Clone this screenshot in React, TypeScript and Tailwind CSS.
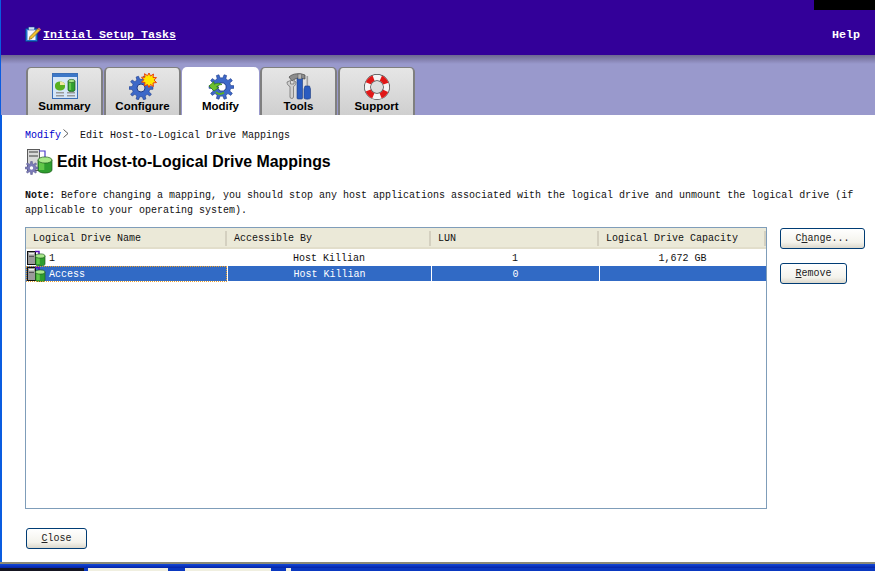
const mono = "font-['Liberation_Mono',monospace]"
const sans = "font-['Liberation_Sans',Arial,sans-serif]"

function gearPath(cx: number, cy: number, outer: number, inner: number, teeth: number) {
  const pts: string[] = []
  const step = (Math.PI * 2) / teeth
  for (let i = 0; i < teeth; i++) {
    const a = i * step
    const list: [number, number][] = [
      [inner, a - step * 0.5],
      [inner, a - step * 0.27],
      [outer, a - step * 0.17],
      [outer, a + step * 0.17],
      [inner, a + step * 0.27],
    ]
    list.forEach(([r, t]) => {
      pts.push(`${(cx + r * Math.cos(t)).toFixed(2)} ${(cy + r * Math.sin(t)).toFixed(2)}`)
    })
  }
  return `M${pts.join("L")}Z`
}

function Cylinder({ x, y, w, h }: { x: number; y: number; w: number; h: number }) {
  const ry = w * 0.22
  return (
    <g>
      <path d={`M${x} ${y}V${y + h}A${w / 2} ${ry} 0 0 0 ${x + w} ${y + h}V${y}Z`} fill="#2f9e2f" stroke="#1c5c1c" strokeWidth="0.7" />
      <path d={`M${x + 1} ${y}V${y + h}H${x + w * 0.45}V${y}Z`} fill="#62c84a" />
      <ellipse cx={x + w / 2} cy={y} rx={w / 2} ry={ry} fill="#a8e88a" stroke="#1c5c1c" strokeWidth="0.7" />
    </g>
  )
}

function SummaryIcon() {
  return (
    <svg width="26" height="27" viewBox="0 0 26 27">
      <rect x="0.5" y="0.5" width="25" height="25" fill="#d5e6f8" stroke="#3b6fb5" />
      <rect x="1" y="1" width="24" height="3" fill="#3d78c8" />
      <path d="M3 12A5 3.500 0 0 1 13 12V14A5 3.500 0 0 1 3 14Z" fill="#58b020" />
      <path d="M8 12V8.500A5 3.500 0 0 1 13 12Z" fill="#f2e8a0" />
      <Cylinder x={16} y={8} w={7} h={9} />
      <rect x="4" y="19" width="8" height="1.500" fill="#9a9a9a" />
      <rect x="4" y="22" width="8" height="1.500" fill="#9a9a9a" />
      <rect x="15" y="19" width="8" height="1.500" fill="#9a9a9a" />
      <rect x="15" y="22" width="8" height="1.500" fill="#9a9a9a" />
    </svg>
  )
}

function ConfigureIcon() {
  return (
    <svg width="28" height="27" viewBox="0 0 28 27">
      <path d={gearPath(12, 15, 12, 8.8, 10)} fill="#3d68c8" stroke="#1e3c8c" strokeWidth="0.6" />
      <circle cx="12" cy="15" r="4" fill="#dcdcdc" stroke="#1e3c8c" />
      <path d="M20 0l1.500 3 3-2-.5 3.500 3.500.2-2.500 2.400 2.500 2.400-3.500.5.5 3.500-3-2-1.500 3-1.500-3-3 1.500.5-3.500-3.500-.5 2.500-2.300-2.500-2.500 3.500 0-.5-3.500 3 2z" fill="#ffe600" stroke="#e8400c" strokeWidth="1" />
    </svg>
  )
}

function ModifyIcon() {
  return (
    <svg width="26" height="26" viewBox="0 0 26 26">
      <path d={gearPath(13.5, 13, 12.5, 9.2, 10)} fill="#3d68c8" stroke="#1e3c8c" strokeWidth="0.6" />
      <circle cx="14" cy="13" r="4.200" fill="#fff" stroke="#1e3c8c" />
      <path d="M1 12l5-4.500v2.700c3.500-1.500 6-1.200 8 .3-2.500.2-4.500 1-5.500 2.500l2.500.5-5 3.500z" fill="#6cc02c" stroke="#2c7a12" strokeWidth="0.7" />
      <path d="M8 18c2 2.500 5 2.500 8 .5" fill="none" stroke="#58b020" strokeWidth="2" />
    </svg>
  )
}

function ToolsIcon() {
  return (
    <svg width="26" height="27" viewBox="0 0 26 27">
      <path d="M3 4C7 0 14 0 19 2V6C14 5 11 5 9 6L6 8Z" fill="#8c8c8c" stroke="#444" strokeWidth="0.7" />
      <rect x="11" y="5" width="5.500" height="21" rx="1" fill="#2a5cc0" stroke="#1c3c80" strokeWidth="0.6" />
      <rect x="12" y="1" width="3.500" height="5" fill="#b8b8b8" stroke="#555" strokeWidth="0.5" />
      <path d="M1 9c0 2.500 1.500 4 3 4.500V24c0 2 3.500 2 3.500 0V13.500C9 13 10 11 10 9L8 7.500V11H4.500V7.500Z" fill="#cfcfcf" stroke="#666" strokeWidth="0.7" />
      <rect x="20.500" y="3" width="1.600" height="11" fill="#a0a0a0" />
      <path d="M19 13h4.500l1 3v9c0 1.500-6.500 1.500-6.500 0v-9z" fill="#2a5cc0" stroke="#1c3c80" strokeWidth="0.6" />
    </svg>
  )
}

function SupportIcon() {
  return (
    <svg width="26" height="26" viewBox="0 0 26 26">
      <circle cx="13" cy="13" r="9.500" fill="none" stroke="#444" strokeWidth="6.800" />
      <circle cx="13" cy="13" r="9.500" fill="none" stroke="#f4f4f4" strokeWidth="5.400" />
      <circle cx="13" cy="13" r="9.500" fill="none" stroke="#e01818" strokeWidth="5.400" strokeDasharray="7.500 7.420" strokeDashoffset="3.750" transform="rotate(45 13 13)" />
    </svg>
  )
}

function NotepadIcon() {
  return (
    <svg width="16" height="17" viewBox="0 0 16 17">
      <rect x="0.500" y="2.500" width="12" height="13" rx="1" fill="#1f6fd0" stroke="#103a8c" />
      <rect x="2.500" y="4" width="8" height="10" fill="#f6f8ff" />
      <rect x="3.500" y="1" width="6" height="3" fill="#cfe0f6" stroke="#103a8c" strokeWidth="0.5" />
      <path d="M5 10.500L13 2.500l2 2-8 8-3 1z" fill="#f0c030" stroke="#6b4a10" strokeWidth="0.6" />
      <path d="M13 2.500l2 2 1-1-2-2z" fill="#e07070" />
    </svg>
  )
}

function MappingIcon() {
  return (
    <svg width="28" height="27" viewBox="0 0 28 27">
      <rect x="2.500" y="1.500" width="12" height="21" fill="#d8d8d8" stroke="#5a5a5a" />
      <rect x="4" y="3" width="9" height="2" fill="#8a8a8a" />
      <rect x="4" y="7" width="9" height="2" fill="#8a8a8a" />
      <path d="M14 3h6v7" fill="none" stroke="#4b3cc8" strokeWidth="1.200" />
      <Cylinder x={13} y={12} w={14} h={10} />
      <path d={gearPath(6.500, 20, 6.500, 4.400, 8)} fill="#7c7cb8" stroke="#4a4a80" strokeWidth="0.5" />
      <circle cx="6.500" cy="20" r="1.700" fill="#fff" />
    </svg>
  )
}

function RowIcon() {
  return (
    <svg width="20" height="16" viewBox="0 0 20 16">
      <rect x="0.500" y="1.500" width="8" height="13" fill="#9a9a9a" stroke="#111" />
      <rect x="2" y="3" width="5" height="1.500" fill="#eee" />
      <rect x="2" y="6" width="5" height="1" fill="#555" />
      <path d="M8 1.500h4v4" fill="none" stroke="#5a10b8" strokeWidth="1.500" />
      <Cylinder x={8.500} y={6} w={9.500} h={8} />
    </svg>
  )
}

function Tab({ label, icon, active }: { label: string; icon: React.ReactNode; active?: boolean }) {
  return (
    <div
      className={`w-[77px] h-[48px] flex flex-col items-center rounded-t-[5px] ${
        active ? "bg-white" : "border-x-2 border-t border-[#7f7f7f] bg-[linear-gradient(#e6e6e6,#cfcfcf)]"
      }`}
    >
      <div className={`h-[27px] flex items-center justify-center ${active ? "mt-[6px]" : "mt-[5px]"}`}>{icon}</div>
      <span className={`${sans} text-[11.5px] font-bold text-black leading-[13px]`}>{label}</span>
    </div>
  )
}

function XpButton({ children, width }: { children: React.ReactNode; width: string }) {
  return (
    <button
      className={`${width} h-[21px] rounded-[3px] border border-[#003c74] bg-[linear-gradient(#ffffff,#f4f3ec_70%,#dcd8cc)] ${mono} text-[10px] leading-none text-[#222] flex items-center justify-center`}
    >
      {children}
    </button>
  )
}

const colClass = "flex items-center justify-center text-[10px]"

export default function App() {
  return (
    <div className={`w-[875px] h-[571px] overflow-hidden relative flex flex-col bg-black ${mono}`}>
      <div className="absolute right-0 top-0 w-[61px] h-[10px] bg-black" />

      <div className="flex-1 flex flex-col border-l border-[#0a5ce0] bg-white min-h-0">
        {/* top bar */}
        <div className="h-[55px] bg-[#330099] flex items-end justify-between pl-[24px] pr-[15px] pb-[13px] shrink-0">
          <div className="flex items-center gap-[2px] text-white -mb-[1px]">
            <NotepadIcon />
            <span className="text-[11.67px] font-bold underline leading-[14px]">Initial Setup Tasks</span>
          </div>
          <span className="text-[11.67px] font-bold text-white leading-[14px]">Help</span>
        </div>

        {/* tabs */}
        <div className="h-[60px] shrink-0 flex items-end gap-[1px] pl-[25px] bg-[linear-gradient(#6d6790,#9999cc_9px)]">
          <Tab label="Summary" icon={<SummaryIcon />} />
          <Tab label="Configure" icon={<ConfigureIcon />} />
          <Tab label="Modify" icon={<ModifyIcon />} active />
          <Tab label="Tools" icon={<ToolsIcon />} />
          <Tab label="Support" icon={<SupportIcon />} />
        </div>

        {/* content */}
        <div className="flex-1 flex flex-col border-l border-[#0a5ce0] pl-[23px] pr-[10px] min-h-0 text-[10px] text-[#111]">
          <div className="flex items-center h-[14px] mt-[13px]">
            <span className="text-[#0000cc] w-[37px]">Modify</span>
            <svg width="8" height="10" viewBox="0 0 8 10" className="-mt-[3px]">
              <path d="M1.500 .5L6 4.500 1.500 8.500" fill="none" stroke="#333" strokeWidth="0.8" />
            </svg>
            <span className="ml-[10px]">Edit Host-to-Logical Drive Mappings</span>
          </div>

          <div className="flex items-center h-[27px] mt-[6px] gap-[4px]">
            <MappingIcon />
            <span className={`${sans} text-[15.9px] font-bold text-black leading-none`}>Edit Host-to-Logical Drive Mappings</span>
          </div>

          <p className="mt-[13px] h-[30px] leading-[15px] w-[840px]">
            <b>Note:</b> Before changing a mapping, you should stop any host applications associated with the logical drive and unmount the logical drive (if applicable to your operating system).
          </p>

          <div className="flex mt-[9px] gap-[13px]">
            {/* table */}
            <div className="w-[742px] h-[282px] border border-[#7f9db9] bg-white shrink-0">
              <div className="h-[21px] pt-[3px] grid grid-cols-[201px_204px_168px_167px] bg-[#ebe9d8] border-b-2 border-[#e2decb]">
                {["Logical Drive Name", "Accessible By", "LUN", "Logical Drive Capacity"].map((h) => (
                  <div key={h} className="flex items-center border-r-2 border-[#d4d0c0] mb-[1px] pl-[7px]">
                    {h}
                  </div>
                ))}
              </div>
              <div className="h-[17px] pt-[1px] grid grid-cols-[201px_204px_168px_167px] items-center">
                <div className="flex items-center gap-[2px] pl-[1px] -mt-[1px]">
                  <RowIcon />
                  <span className="mt-[1px]">1</span>
                </div>
                <div className={colClass}>Host Killian</div>
                <div className={colClass}>1</div>
                <div className={colClass}>1,672 GB</div>
              </div>
              <div className="h-[15px] grid grid-cols-[201px_204px_168px_167px] bg-[#316ac5] text-white">
                <div className="flex items-center gap-[2px] pl-[1px] outline outline-1 -outline-offset-1 outline-dotted outline-[#e8a030]">
                  <RowIcon />
                  <span>Access</span>
                </div>
                <div className={`${colClass} border-l border-white`}>Host Killian</div>
                <div className={`${colClass} border-l border-white`}>0</div>
                <div className={`${colClass} border-l border-white`}></div>
              </div>
            </div>

            {/* side buttons */}
            <div className="flex flex-col items-start gap-[14px] pt-[1px]">
              <XpButton width="w-[85px]">
                <span>
                  C<u>h</u>ange...
                </span>
              </XpButton>
              <XpButton width="w-[67px]">
                <span>
                  <u>R</u>emove
                </span>
              </XpButton>
            </div>
          </div>

          <div className="mt-[19px] pl-[1px]">
            <XpButton width="w-[61px]">
              <span>
                <u>C</u>lose
              </span>
            </XpButton>
          </div>
        </div>
      </div>

      {/* taskbar remains */}
      <div className="h-[9px] shrink-0 flex flex-col">
        <div className="h-[2px] bg-[#8a8a78]" />
        <div className="h-[4px] bg-[linear-gradient(#1248d8,#0524a8)]" />
        <div className="h-[3px] flex bg-[#0a38c0]">
          <div className="w-[84px] bg-[#151520]" />
          <div className="w-[4px]" />
          <div className="w-[80px] bg-[#f0efe0]" />
          <div className="w-[17px]" />
          <div className="w-[86px] bg-[#f0efe0]" />
          <div className="w-[15px]" />
          <div className="w-[5px] bg-[#f0efe0]" />
        </div>
      </div>
    </div>
  )
}
